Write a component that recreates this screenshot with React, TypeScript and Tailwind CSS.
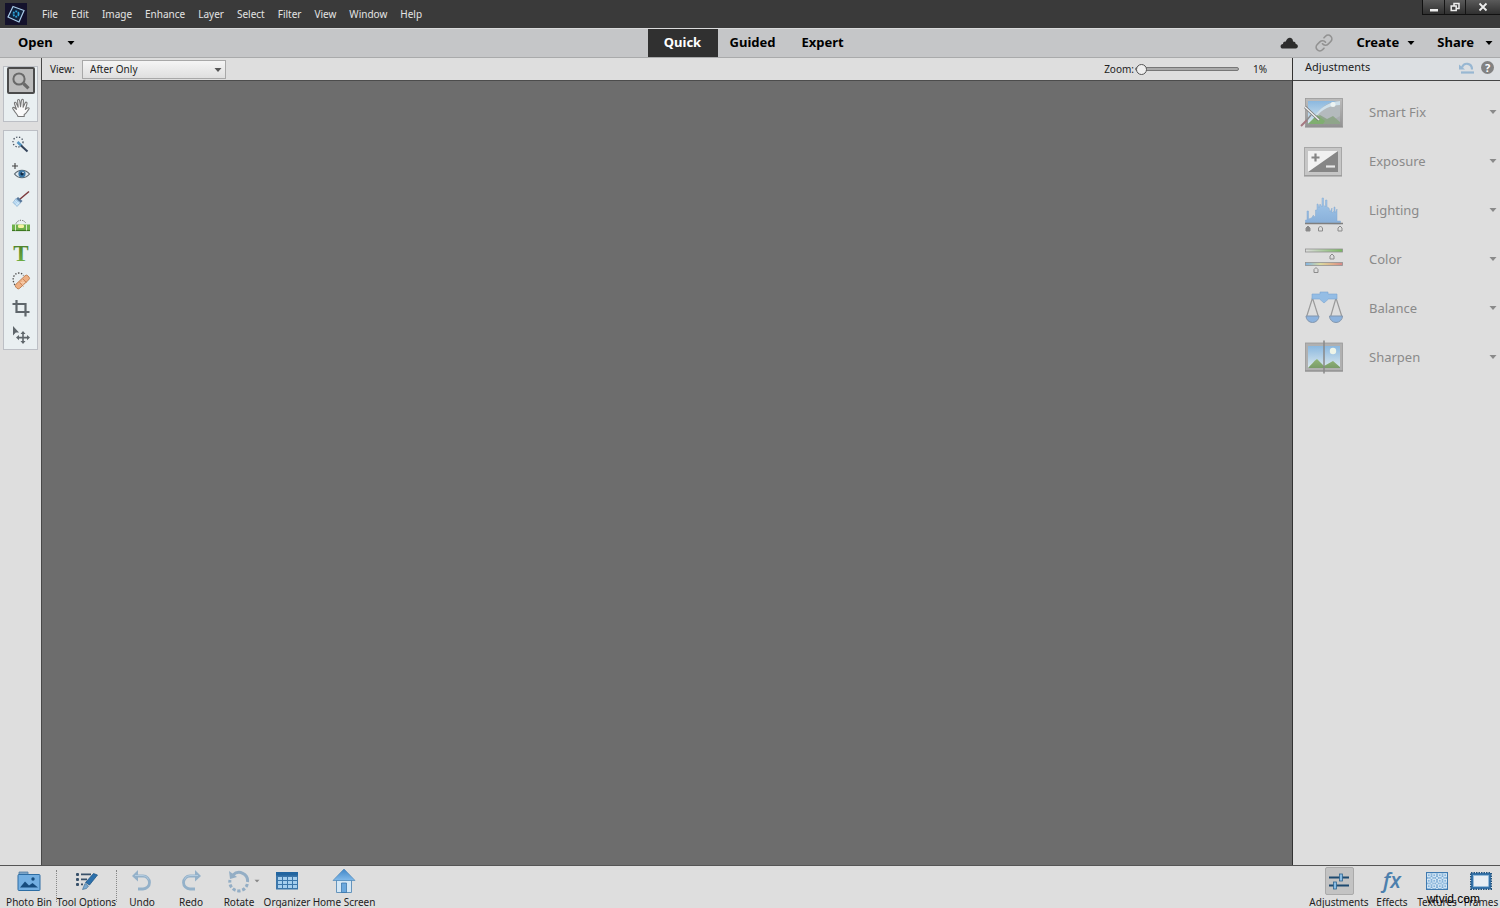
import type { ReactNode } from "react"

const menus = ["File", "Edit", "Image", "Enhance", "Layer", "Select", "Filter", "View", "Window", "Help"]

const Caret = ({ className = "" }: { className?: string }) => (
  <svg viewBox="0 0 8 4" className={`h-1 w-2 shrink-0 ${className}`} fill="currentColor">
    <path d="M0.5 0h7L4 4z" />
  </svg>
)

const Logo = () => (
  <svg viewBox="0 0 22 22" className="size-[22px]">
    <rect width="22" height="22" fill="#14122c" />
    <path d="M8 3.500l11 4-5 11.500-11-5z" fill="#10223c" stroke="#a9cbe8" strokeWidth="1.200" />
    <circle cx="11" cy="11" r="2.600" fill="none" stroke="#2fa5dc" strokeWidth="1.800" strokeDasharray="1.900 0.900" />
  </svg>
)

const ZoomIcon = () => (
  <svg viewBox="0 0 20 20" className="size-5" fill="none" stroke="#696969">
    <circle cx="8" cy="8" r="5.600" strokeWidth="2" />
    <path d="M12.500 12.500l5 4.800" strokeWidth="3.200" />
  </svg>
)

const HandIcon = () => (
  <svg viewBox="0 0 20 20" className="size-5" fill="#fafafa" stroke="#777" strokeWidth="1.100" strokeLinejoin="round">
    <path d="M7 18.500c-.5-2-2.500-3.500-3.600-5.500C2.500 11.500 1 10.500 1.700 9.600c.9-.8 2.300.3 3.700 1.700L3.500 5.800c-.5-1.800 1.200-2.200 1.800-.6l1.900 4-.6-6.500c0-1.700 1.900-1.700 2.100 0l.8 6.100.9-6.300c.3-1.600 2.100-1.400 2 .3l-.3 6.500 2-4.300c.7-1.500 2.300-.8 1.900.7l-1.600 5.800c.9-1 2.600-2.400 3.700-1.400.6.700-.8 1.700-1.700 3.200-1 1.600-1.700 2.500-3.200 3.300v1.900z" />
  </svg>
)

const QuickSelectIcon = () => (
  <svg viewBox="0 0 20 20" className="size-5" fill="none">
    <circle cx="7" cy="7" r="5" stroke="#444f5c" strokeWidth="1.300" strokeDasharray="1.300 1.700" />
    <path d="M6.500 7l4 3.800" stroke="#5797c4" strokeWidth="2.600" />
    <path d="M10 10.500l6.500 6" stroke="#33435a" strokeWidth="2" />
  </svg>
)

const RedEyeIcon = () => (
  <svg viewBox="0 0 20 20" className="size-5" fill="none">
    <path d="M4 1v6M1 4h6" stroke="#444" strokeWidth="1.100" />
    <path d="M3.500 12c4-5 11-5 15 0-4 5-11 5-15 0z" fill="#dfe8ee" stroke="#59656e" strokeWidth="1.200" />
    <circle cx="11" cy="11.800" r="3.600" fill="#3875a4" />
    <circle cx="11" cy="11.800" r="1.600" fill="#122b45" />
    <circle cx="12" cy="10.500" r=".7" fill="#fff" />
  </svg>
)

const WhitenIcon = () => (
  <svg viewBox="0 0 20 20" className="size-5" fill="none">
    <path d="M8.500 10.500L18 2.500" stroke="#7d3b3e" strokeWidth="1.500" />
    <path d="M7 8l4.500 4-2 2L5 10z" fill="#57779a" />
    <path d="M5 9.500l4.500 4.500-3.500 3.500-4-4z" fill="#a9ceec" stroke="#83a8c8" strokeWidth=".6" />
    <path d="M2.800 12.300l4.300 4M4 11.200l4.300 4M4.500 16.500l4-3.500" stroke="#ddf0fc" strokeWidth=".7" />
  </svg>
)

const StraightenIcon = () => (
  <svg viewBox="0 0 20 20" className="size-5" fill="none">
    <path d="M5 7.500a5.500 5.500 0 0 1 10 0" stroke="#555" strokeDasharray="1.200 1.300" />
    <rect x="1" y="8.500" width="18" height="6" fill="#6fb14b" />
    <path d="M1 14.500h18" stroke="#3c7820" strokeWidth="1.200" />
    <path d="M4.500 8.500v6M15.500 8.500v6" stroke="#d8e9cc" />
    <rect x="7" y="8.500" width="6" height="3.500" rx="1.500" fill="#f6f2a0" />
  </svg>
)

const TextIcon = () => (
  <svg viewBox="0 0 20 24" className="h-6 w-5">
    <defs>
      <linearGradient id="text-tool" x1="0" y1="0" x2="0" y2="1">
        <stop offset="0" stopColor="#467826" />
        <stop offset="1" stopColor="#75b846" />
      </linearGradient>
    </defs>
    <text x="10" y="19" textAnchor="middle" fontFamily="Liberation Serif, serif" fontWeight="700" fontSize="23" fill="url(#text-tool)">T</text>
  </svg>
)

const HealIcon = () => (
  <svg viewBox="0 0 20 20" className="size-5" fill="none">
    <path d="M4 14C0 8 3 2 8 2c2 0 4 1 4.500 2.500" stroke="#4d4d4d" strokeWidth="1.300" strokeDasharray="1.400 1.500" />
    <rect x="3" y="8.500" width="16.500" height="5.500" rx="2" transform="rotate(-43 11 11)" fill="#eeb084" stroke="#b97646" strokeWidth=".8" />
    <path d="M8.500 11.500l4 4M12 8l3.500 3.500" stroke="#c17d50" strokeWidth=".8" />
    <path d="M10.500 11.500h.8M12.500 11.500h.8M11.500 13h.8M11.500 10h.8" stroke="#fff0dd" />
  </svg>
)

const CropIcon = () => (
  <svg viewBox="0 0 20 20" className="size-5" fill="none" stroke="#5f666b" strokeWidth="2.200">
    <path d="M5.500 2v12h13M1.500 6h13v12.500" />
  </svg>
)

const MoveIcon = () => (
  <svg viewBox="0 0 20 20" className="size-5" fill="#5f666b">
    <path d="M2 1l6 6.500-3.200.1L2 10.600z" />
    <path d="M12 6l2.500 3h-1.700v2.800H16V10l3 2.600-3 2.600v-1.800h-3.200V16h1.700L12 19l-2.500-3h1.700v-2.600H8v1.800l-3-2.600L8 10v1.800h3.200V9H9.500z" />
  </svg>
)

const FrameDefs = () => (
  <defs>
    <linearGradient id="frame-grey" x1="0" y1="0" x2="0" y2="1">
      <stop offset="0" stopColor="#bcbcbc" />
      <stop offset="1" stopColor="#939393" />
    </linearGradient>
    <linearGradient id="sky" x1="0" y1="0" x2="0" y2="1">
      <stop offset="0" stopColor="#8bb8df" />
      <stop offset="1" stopColor="#dce9ee" />
    </linearGradient>
    <linearGradient id="hill" x1="0" y1="0" x2="0" y2="1">
      <stop offset="0" stopColor="#91b578" />
      <stop offset="1" stopColor="#7a9c69" />
    </linearGradient>
  </defs>
)

const SmartFixIcon = () => (
  <svg viewBox="0 0 44 36" className="h-9 w-11">
    <FrameDefs />
    <rect x="5.500" y="3.500" width="37" height="28" fill="url(#frame-grey)" stroke="#9a9a9a" strokeWidth=".8" />
    <rect x="8" y="6" width="32" height="23" fill="#a9adb0" />
    <path d="M8 6h30C24 8 17 16 12 27l-4 2z" fill="url(#sky)" />
    <path d="M12 27C18 16 26 9 40 7v14l-7 4z" fill="#b4babd" />
    <path d="M16 19C22 11 30 7 40 6v4c-9 0-18 4-24 12z" fill="#cfe0ea" />
    <circle cx="33" cy="9.500" r="2.500" fill="#edf4f3" />
    <path d="M8 29l6-5 6-4 7 4 6-3 7 6v2z" fill="#8fa58a" />
    <path d="M8 29l9-9 8 6-2 3z" fill="#7fae70" />
    <path d="M5 32h38" stroke="#858585" />
    <path d="M5 12l14 13" stroke="#777" strokeWidth="3" />
    <path d="M5 12l14 13" stroke="#f0f0f0" strokeWidth="1.500" />
    <path d="M1 31l6-6" stroke="#a47880" strokeWidth="2" />
    <path d="M7 25l4-5" stroke="#8b8b8b" strokeWidth="1.500" />
  </svg>
)

const ExposureIcon = () => (
  <svg viewBox="0 0 44 36" className="h-9 w-11">
    <rect x="4.500" y="3.500" width="37" height="28" fill="#c6c6c6" stroke="#a7a7a7" />
    <path d="M8 7h30v21H8z" fill="#868686" />
    <path d="M8 7h30L8 28z" fill="#f1f1f1" />
    <path d="M11.500 13.500h8M15.500 9.500v8" stroke="#858585" strokeWidth="2.200" />
    <path d="M26 22.500h9" stroke="#e8e8e8" strokeWidth="2.200" />
    <path d="M4 32h38" stroke="#929292" />
  </svg>
)

const Knob = ({ x, y, fill = "#ddd" }: { x: number; y: number; fill?: string }) => (
  <path d={`M${x} ${y}l2 2v3h-4v-3z`} fill={fill} stroke="#8b8b8b" strokeWidth="1" />
)

const LightingIcon = () => (
  <svg viewBox="0 0 44 42" className="h-[42px] w-11">
    <defs>
      <linearGradient id="histogram" x1="0" y1="0" x2="0" y2="1">
        <stop offset="0" stopColor="#a3c8ea" />
        <stop offset="1" stopColor="#88afd9" />
      </linearGradient>
    </defs>
    <path d="M5.500 33V30h1.500v-9h1.500v8l3-1 2-3v2l2-1v-6h1.500v-6h1l1 4 1-4 2 3V8h1.500v7l2 2v-7h1.500v7l2 1 1 4 2-4v5l2-2v-4h1v6l2-4v12h3.500v3z" fill="url(#histogram)" stroke="#84abd3" strokeWidth=".5" />
    <path d="M5 33.500h38" stroke="#7f7f7f" strokeWidth="1.500" />
    <Knob x={8} y={36} fill="#888" />
    <Knob x={20.500} y={36} />
    <Knob x={40} y={36} />
  </svg>
)

const ColorIcon = () => (
  <svg viewBox="0 0 44 36" className="h-9 w-11">
    <defs>
      <linearGradient id="green-track">
        <stop offset="0" stopColor="#ddd" />
        <stop offset="1" stopColor="#77b85e" />
      </linearGradient>
      <linearGradient id="hue-track">
        <stop offset="0" stopColor="#7fb3e4" />
        <stop offset=".4" stopColor="#d9d9a0" />
        <stop offset=".7" stopColor="#e0b38b" />
        <stop offset="1" stopColor="#d68787" />
      </linearGradient>
    </defs>
    <rect x="5.500" y="7" width="37" height="3" fill="url(#green-track)" stroke="#929292" strokeWidth=".8" />
    <rect x="5.500" y="20.500" width="37" height="3" fill="url(#hue-track)" stroke="#929292" strokeWidth=".8" />
    <Knob x={32} y={12} />
    <Knob x={16} y={25.500} />
  </svg>
)

const BalanceIcon = () => (
  <svg viewBox="0 0 44 36" className="h-9 w-11" fill="none">
    <path d="M12.500 7L6.500 26M12.500 7l6 19M36 7l-5.500 19M36 7l6 19" stroke="#9a9a9a" strokeWidth="1.200" />
    <path d="M12 3h8V1h8v2h9v5h-8.500L24 12l-4.500-4H12z" fill="#94bde5" stroke="#7ba5d0" strokeWidth=".6" />
    <path d="M6 25h13a6.500 6.500 0 0 1-13 0zM29.500 25h13a6.500 6.500 0 0 1-13 0z" fill="#8db3de" stroke="#8296ae" />
  </svg>
)

const SharpenIcon = () => (
  <svg viewBox="0 0 44 36" className="h-9 w-11">
    <rect x="5.500" y="3" width="37" height="28" fill="#b0b0b0" stroke="#999" strokeWidth=".8" />
    <rect x="8" y="6" width="32" height="22" fill="url(#sky)" />
    <path d="M8 28c3-3 6-7 9-9l7 7 9-5 7 6v1z" fill="url(#hill)" />
    <circle cx="33" cy="11" r="3.200" fill="#eef4e8" />
    <path d="M24 .5v33" stroke="#888" strokeWidth="1.500" />
    <path d="M5 31h38" stroke="#8a8a8a" />
  </svg>
)

const PhotoBinIcon = () => (
  <svg viewBox="0 0 24 24" className="size-6">
    <path d="M2 3h9v3H2z" fill="#7ba4c8" stroke="#557da1" strokeWidth=".8" />
    <rect x="1" y="5.500" width="22" height="16" rx="1" fill="#73afe2" stroke="#2e6da3" />
    <path d="M3 18.500l5-6 4 4 3.500-2.500 5.500 4.500z" fill="#164c7e" />
    <circle cx="16" cy="10" r="1.700" fill="#164c7e" />
  </svg>
)

const ToolOptionsIcon = () => (
  <svg viewBox="0 0 24 24" className="size-6">
    <g fill="#38516a">
      <rect x="1" y="4" width="3" height="3" rx="1" />
      <rect x="1" y="9" width="3" height="3" rx="1" />
      <rect x="1" y="14" width="3" height="3" rx="1" />
      <path d="M6 4.500h10v1.800H6zM6 9.500h6v1.800H6zM6 14.500h2v1.800H6z" />
    </g>
    <path d="M18.500 4.500l4 1.500-8 10-4-2.500z" fill="#2c70ac" stroke="#174f80" strokeWidth=".7" />
    <path d="M10 14.500l3.500 2.500-2 2.500-4 1z" fill="#7aa9d1" stroke="#3a698f" strokeWidth=".6" />
  </svg>
)

const UndoIcon = ({ flip = false }: { flip?: boolean }) => (
  <svg viewBox="0 0 24 24" className={flip ? "size-6 -scale-x-100" : "size-6"} fill="none">
    <path d="M4 7h9a6.300 6.300 0 0 1 0 13H8" stroke="#94b1c9" strokeWidth="2.800" />
    <path d="M8 1L2 7l6 5.500z" fill="#94b1c9" />
    <path d="M5 6.500h8a6 6 0 0 1 5.500 4" stroke="#b4cce0" />
  </svg>
)

const RotateIcon = () => (
  <svg viewBox="0 0 24 24" className="size-6" fill="none" stroke="#94aec5">
    <path d="M6 6A8.500 8.500 0 0 1 20.500 13" strokeWidth="3" />
    <path d="M20.300 15A8.800 8.800 0 0 1 3 11" strokeWidth="3" strokeDasharray="3.200 1.800" />
    <path d="M2 2l1 8 7-2z" fill="#94aec5" stroke="none" />
  </svg>
)

const OrganizerIcon = () => (
  <svg viewBox="0 0 24 24" className="size-6">
    <rect x="1" y="3" width="22" height="17.500" fill="#3b76aa" />
    <path d="M1 3h22v3.500H1z" fill="#2265a0" />
    {[8, 12, 16].map((y) =>
      [3, 8, 13, 18].map((x) => <rect key={`${x}-${y}`} x={x} y={y} width="4" height="3" fill="#a6cfee" />)
    )}
  </svg>
)

const HomeIcon = () => (
  <svg viewBox="0 0 24 26" className="h-[26px] w-6">
    <defs>
      <linearGradient id="roof" x1="0" y1="0" x2="0" y2="1">
        <stop offset="0" stopColor="#3f86c8" />
        <stop offset="1" stopColor="#83bbea" />
      </linearGradient>
    </defs>
    <path d="M4.500 12h15v12.500h-15z" fill="#d4e7f5" stroke="#6594bc" />
    <path d="M12 1l11 11.500H1z" fill="url(#roof)" stroke="#4d86b8" strokeWidth=".7" />
    <path d="M9.500 15h5v9.500h-5z" fill="#6ba8dd" stroke="#326fa5" strokeWidth=".7" />
  </svg>
)

const AdjustmentsIcon = () => (
  <svg viewBox="0 0 24 24" className="size-6">
    <path d="M2 8.500h20M2 16.500h20" stroke="#1e4a70" strokeWidth="2.200" />
    <rect x="12.500" y="5" width="3" height="7" fill="#8abce4" stroke="#2d648f" strokeWidth=".8" />
    <rect x="6.500" y="13" width="3" height="7" fill="#8abce4" stroke="#2d648f" strokeWidth=".8" />
  </svg>
)

const EffectsIcon = () => (
  <svg viewBox="0 0 28 30" className="h-[30px] w-7">
    <text x="14" y="22" textAnchor="middle" fontFamily="Open Sans, sans-serif" fontStyle="italic" fontWeight="600" fontSize="21" fill="#4c80ad">fx</text>
  </svg>
)

const TexturesIcon = () => (
  <svg viewBox="0 0 24 24" className="size-6">
    <defs>
      <pattern id="texture" width="5.500" height="5.500" patternUnits="userSpaceOnUse" x="1" y="3.500">
        <rect width="5.500" height="5.500" fill="#78a9d4" />
        <circle cx="2.750" cy="2.750" r="1.700" fill="#86b4db" stroke="#e6f2fb" strokeWidth="1" />
        <path d="M0 0h1v1H0zM4.500 0h1v1h-1zM0 4.500h1v1H0zM4.500 4.500h1v1h-1z" fill="#d2e6f5" />
      </pattern>
    </defs>
    <rect x="1.500" y="3.500" width="21" height="17" fill="url(#texture)" stroke="#3f7ab0" />
  </svg>
)

const FramesIcon = () => (
  <svg viewBox="0 0 24 24" className="size-6">
    <rect x="2" y="4" width="20" height="16" fill="#3f7fb6" stroke="#24557e" strokeWidth="2" strokeDasharray="1.500 1" />
    <rect x="2.500" y="4.500" width="19" height="15" fill="#3473a9" />
    <rect x="4.500" y="6.500" width="15" height="11" fill="#e8eef3" stroke="#9cc3e2" strokeWidth=".6" />
  </svg>
)

const CloudIcon = () => (
  <svg viewBox="0 0 18 12" className="h-3 w-[18px]" fill="#2d2d2d">
    <path d="M3 11.500C-.5 11.500 0 7 3 7c0-2 1.500-2.800 2.800-2.400C7-.5 13-.5 13 4.500c2 0 2.700 1 2.700 2.500 3 .2 2.800 4.500 0 4.500z" />
  </svg>
)

const LinkIcon = () => (
  <svg viewBox="0 0 24 24" className="size-[18px]" fill="none" stroke="#929292" strokeWidth="2.200" strokeLinecap="round">
    <path d="M10 13a5 5 0 0 0 7.500.5l3.500-3.500a4.900 4.900 0 0 0-7-7l-2 2" />
    <path d="M14 11a5 5 0 0 0-7.500-.5L3 14a4.900 4.900 0 0 0 7 7l2-2" />
  </svg>
)

const ResetIcon = () => (
  <svg viewBox="0 0 16 14" className="h-[14px] w-4" fill="none" stroke="#98b7d2">
    <path d="M3 6.500C5 1 13 1.500 13 8.500" strokeWidth="2.200" />
    <path d="M0 3.500v5h6z" fill="#98b7d2" stroke="none" />
    <path d="M2 11.500h13" strokeWidth="2.200" />
  </svg>
)

const tools: { name: string; icon: ReactNode }[] = [
  { name: "Quick Selection", icon: <QuickSelectIcon /> },
  { name: "Red Eye Removal", icon: <RedEyeIcon /> },
  { name: "Whiten Teeth", icon: <WhitenIcon /> },
  { name: "Straighten", icon: <StraightenIcon /> },
  { name: "Type", icon: <TextIcon /> },
  { name: "Spot Healing", icon: <HealIcon /> },
  { name: "Crop", icon: <CropIcon /> },
  { name: "Move", icon: <MoveIcon /> },
]

const adjustments: { name: string; icon: ReactNode }[] = [
  { name: "Smart Fix", icon: <SmartFixIcon /> },
  { name: "Exposure", icon: <ExposureIcon /> },
  { name: "Lighting", icon: <LightingIcon /> },
  { name: "Color", icon: <ColorIcon /> },
  { name: "Balance", icon: <BalanceIcon /> },
  { name: "Sharpen", icon: <SharpenIcon /> },
]

const TaskButton = ({ label, width, children }: { label: string; width: string; children: ReactNode }) => (
  <button className={`flex h-full shrink-0 flex-col items-center text-[10px] leading-3 whitespace-nowrap ${width}`}>
    <span className="flex h-[30px] shrink-0 items-center justify-center">{children}</span>
    {label}
  </button>
)

const TitleBar = () => (
  <header className="flex h-7 shrink-0 items-start justify-between bg-[#3a3a3a] text-[10px] text-[#e4e4e4]">
    <div className="flex h-7 items-center">
      <span className="mr-[15px] ml-[5px]">
        <Logo />
      </span>
      <nav className="flex gap-[13px]">
        {menus.map((menu) => (
          <button key={menu}>{menu}</button>
        ))}
      </nav>
    </div>
    <div className="flex h-[15px] border-b border-l border-[#111] bg-linear-to-b from-[#5a5a5a] to-[#303030]">
      <button aria-label="Minimize" className="flex w-[22px] items-center justify-center border-r border-[#151515]">
        <svg viewBox="0 0 10 10" className="size-[10px]">
          <path d="M1 7h8v2.500H1z" fill="#eee" />
        </svg>
      </button>
      <button aria-label="Restore" className="flex w-[21px] items-center justify-center border-r border-[#151515]">
        <svg viewBox="0 0 10 10" className="size-[10px]" fill="none" stroke="#eee" strokeWidth="1.500">
          <path d="M4 4V1.500h5v5H6.500M1.200 4h5v4.500h-5z" />
        </svg>
      </button>
      <button aria-label="Close" className="flex w-[34px] items-center justify-center">
        <svg viewBox="0 0 10 10" className="size-[10px]" stroke="#eee" strokeWidth="1.800">
          <path d="M1.500 1.500l7 7M8.500 1.500l-7 7" />
        </svg>
      </button>
    </div>
  </header>
)

const ModeBar = () => (
  <div className="grid h-[30px] shrink-0 grid-cols-[1fr_auto_1fr] border-t border-b border-t-[#dadbdc] border-b-[#a9aaab] bg-[#c5c6c8] pl-[5px] text-[13px] font-bold text-black">
    <div className="flex items-center">
      <button className="flex items-center gap-[14px] px-[13px]">
        Open <Caret />
      </button>
    </div>
    <nav className="flex">
      <button className="w-[70px] bg-[#303030] text-white">Quick</button>
      <button className="w-[70px]">Guided</button>
      <button className="w-[70px]">Expert</button>
    </nav>
    <div className="flex items-center justify-end pr-[7px]">
      <button aria-label="Cloud" className="mr-[17px]">
        <CloudIcon />
      </button>
      <button aria-label="Link" className="mr-[23px]">
        <LinkIcon />
      </button>
      <button className="mr-[22px] flex items-center gap-2">
        Create <Caret />
      </button>
      <button className="flex items-center gap-[11px]">
        Share <Caret />
      </button>
    </div>
  </div>
)

const ToolBar = () => (
  <aside className="w-[42px] shrink-0 border-r border-[#484848] bg-[#dedede] px-[3px] pt-2">
    <div className="border border-[#bcbfc5] bg-[#e9eff1]">
      <button aria-label="Zoom" className="mx-auto flex h-[27px] w-7 items-center justify-center rounded-xs border-2 border-[#4b4b4b] bg-[#bcbcbc]">
        <ZoomIcon />
      </button>
      <button aria-label="Hand" className="mx-auto flex h-[27px] w-7 items-center justify-center">
        <HandIcon />
      </button>
    </div>
    <div className="mt-2 flex h-[220px] flex-col border border-[#bcbfc5] bg-[#e9eff1]">
      {tools.map((tool) => (
        <button key={tool.name} aria-label={tool.name} className="flex flex-1 items-center justify-center">
          {tool.icon}
        </button>
      ))}
    </div>
  </aside>
)

const OptionsBar = () => (
  <div className="flex h-[23px] shrink-0 items-center border-b border-[#4c4c4c] bg-[#dedede] text-[10px] text-[#222]">
    <label htmlFor="view" className="ml-2 w-8">
      View:
    </label>
    <div className="relative">
      <select
        id="view"
        className="block h-[19px] w-36 appearance-none border border-[#a8a8a8] bg-linear-to-b from-[#f5f5f5] to-[#dfdfdf] px-[7px] text-[10px] leading-4"
      >
        <option>After Only</option>
      </select>
      <Caret className="pointer-events-none absolute top-2 right-1 text-[#555]" />
    </div>
    <label htmlFor="zoom" className="ml-auto">
      Zoom:
    </label>
    <input
      id="zoom"
      type="range"
      min="1"
      max="100"
      defaultValue="1"
      className="ml-px h-3 w-[104px] appearance-none bg-transparent [&::-webkit-slider-runnable-track]:h-1 [&::-webkit-slider-runnable-track]:rounded-full [&::-webkit-slider-runnable-track]:border [&::-webkit-slider-runnable-track]:border-[#777] [&::-webkit-slider-runnable-track]:bg-[#aaa] [&::-webkit-slider-thumb]:-mt-1 [&::-webkit-slider-thumb]:size-[11px] [&::-webkit-slider-thumb]:appearance-none [&::-webkit-slider-thumb]:rounded-full [&::-webkit-slider-thumb]:border [&::-webkit-slider-thumb]:border-[#555] [&::-webkit-slider-thumb]:bg-[#eee]"
    />
    <output htmlFor="zoom" className="ml-[14px] w-[39px]">
      1%
    </output>
  </div>
)

const AdjustmentsPanel = () => (
  <aside className="w-52 shrink-0 border-l border-[#333] bg-[#dedede]">
    <div className="flex h-[23px] items-center border-b border-[#444] bg-[#dcdfe2] pr-[6px] pb-[3px] pl-3 text-[#222]">
      <h2 className="mr-auto text-[11px]">Adjustments</h2>
      <button aria-label="Reset panel">
        <ResetIcon />
      </button>
      <button aria-label="Help" className="ml-[6px] flex size-[13px] items-center justify-center rounded-full bg-[#828282] text-[11px] leading-none font-bold text-white">
        ?
      </button>
    </div>
    <ul className="pt-[7px]">
      {adjustments.map((item) => (
        <li key={item.name}>
          <button className="flex h-[49px] w-full items-center pr-[3px] pl-[7px] text-[13px] text-[#8a8a8a]">
            {item.icon}
            <span className="ml-[25px]">{item.name}</span>
            <Caret className="mb-[2px] ml-auto" />
          </button>
        </li>
      ))}
    </ul>
  </aside>
)

const TaskBar = () => (
  <footer className="relative flex h-[43px] shrink-0 justify-between overflow-hidden border-t border-[#555] bg-[#dedede] text-[#222]">
    <div className="flex">
      <TaskButton label="Photo Bin" width="w-14 pl-[2px]">
        <PhotoBinIcon />
      </TaskButton>
      <div className="mt-1 h-8 border-l border-dotted border-[#888]" />
      <TaskButton label="Tool Options" width="w-[59px]">
        <ToolOptionsIcon />
      </TaskButton>
      <div className="mt-1 h-8 border-l border-dotted border-[#888]" />
      <TaskButton label="Undo" width="w-[50px]">
        <UndoIcon />
      </TaskButton>
      <TaskButton label="Redo" width="w-12">
        <UndoIcon flip />
      </TaskButton>
      <TaskButton label="Rotate" width="w-12">
        <span className="relative">
          <RotateIcon />
          <Caret className="absolute top-[10px] left-[26px] scale-75 text-[#888]" />
        </span>
      </TaskButton>
      <TaskButton label="Organizer" width="w-12">
        <OrganizerIcon />
      </TaskButton>
      <TaskButton label="Home Screen" width="w-[66px]">
        <HomeIcon />
      </TaskButton>
    </div>
    <div className="flex">
      <TaskButton label="Adjustments" width="w-[66px]">
        <span className="flex h-7 w-[29px] items-center justify-center rounded-xs border border-[#aaa] bg-[#c3c3c3]">
          <AdjustmentsIcon />
        </span>
      </TaskButton>
      <TaskButton label="Effects" width="w-10">
        <EffectsIcon />
      </TaskButton>
      <TaskButton label="Textures" width="w-[50px]">
        <TexturesIcon />
      </TaskButton>
      <TaskButton label="Frames" width="w-[38px]">
        <FramesIcon />
      </TaskButton>
    </div>
    <span className="absolute right-5 bottom-[2px] font-['Liberation_Sans',sans-serif] text-[12px] leading-[14px] text-black">
      wtvid.com
    </span>
  </footer>
)

const App = () => {
  return (
    <div className="flex h-screen flex-col overflow-hidden bg-[#dedede] font-['Noto_Sans',sans-serif]">
      <TitleBar />
      <ModeBar />
      <div className="flex min-h-0 flex-1">
        <ToolBar />
        <div className="flex min-w-0 flex-1 flex-col">
          <OptionsBar />
          <main className="flex-1 bg-[#6d6d6d]" />
        </div>
        <AdjustmentsPanel />
      </div>
      <TaskBar />
    </div>
  )
}

export default App
